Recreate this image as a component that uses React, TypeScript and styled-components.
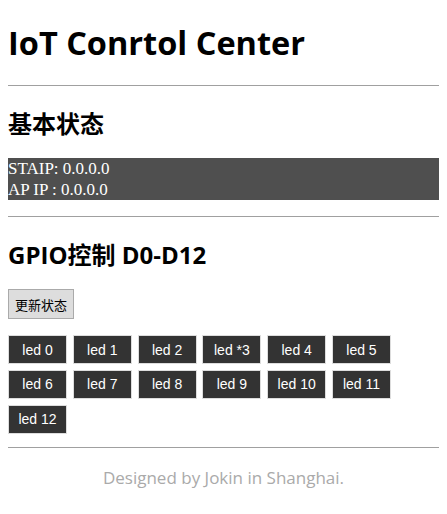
import styled, { createGlobalStyle } from "styled-components";

const GlobalStyle = createGlobalStyle`
  body {
    margin: 0;
    padding: 0 8px;
    background: #fff;
    color: #000;
    font-family: "Open Sans", "Noto Sans CJK SC", sans-serif;
  }
`;

const Title = styled.h1`
  font-size: 32.5px;
  font-weight: 700;
  line-height: 44px;
  margin: 21px 0 20px;
`;

const Rule = styled.hr`
  border: none;
  border-top: 1px solid #a0a0a0;
  margin: 0;
`;

const SectionTitle = styled.h2`
  font-size: 24px;
  font-weight: 700;
  line-height: 28px;
  margin: 24px 0 20px;
`;

const StatusBox = styled.div`
  background: #4f4f4f;
  color: #fff;
  font-family: "Liberation Serif", serif;
  font-size: 17px;
  line-height: 21px;
  margin-bottom: 16px;
`;

const RefreshButton = styled.button`
  display: block;
  height: 30px;
  padding: 0 6px;
  background: #dddddd;
  border: 1px solid #aaaaaa;
  font-family: "Noto Sans CJK SC", sans-serif;
  font-size: 13px;
  color: #000;
  margin-bottom: 16px;
`;

const LedGrid = styled.div`
  display: flex;
  flex-wrap: wrap;
  gap: 5.8px;
  width: 390px;
  margin-bottom: 13px;
`;

const LedButton = styled.button`
  width: 59px;
  height: 29px;
  box-sizing: border-box;
  padding: 0;
  background: #333333;
  border: 1px solid #dddddd;
  color: #fff;
  font-family: "Liberation Sans", Arial, sans-serif;
  font-size: 14px;
`;

const Footer = styled.p`
  margin: 20px 0;
  text-align: center;
  color: #aaaaaa;
  font-size: 17px;
  line-height: 20px;
`;

const leds = ["led 0", "led 1", "led 2", "led *3", "led 4", "led 5", "led 6", "led 7", "led 8", "led 9", "led 10", "led 11", "led 12"];

export default function App() {
  return (
    <>
      <GlobalStyle />
      <Title>IoT Conrtol Center</Title>
      <Rule />
      <SectionTitle>基本状态</SectionTitle>
      <StatusBox>
        <div>STAIP: 0.0.0.0</div>
        <div>AP IP : 0.0.0.0</div>
      </StatusBox>
      <Rule />
      <SectionTitle>GPIO控制 D0-D12</SectionTitle>
      <RefreshButton>更新状态</RefreshButton>
      <LedGrid>
        {leds.map((name) => (
          <LedButton key={name}>{name}</LedButton>
        ))}
      </LedGrid>
      <Rule />
      <Footer>Designed by Jokin in Shanghai.</Footer>
    </>
  );
}
